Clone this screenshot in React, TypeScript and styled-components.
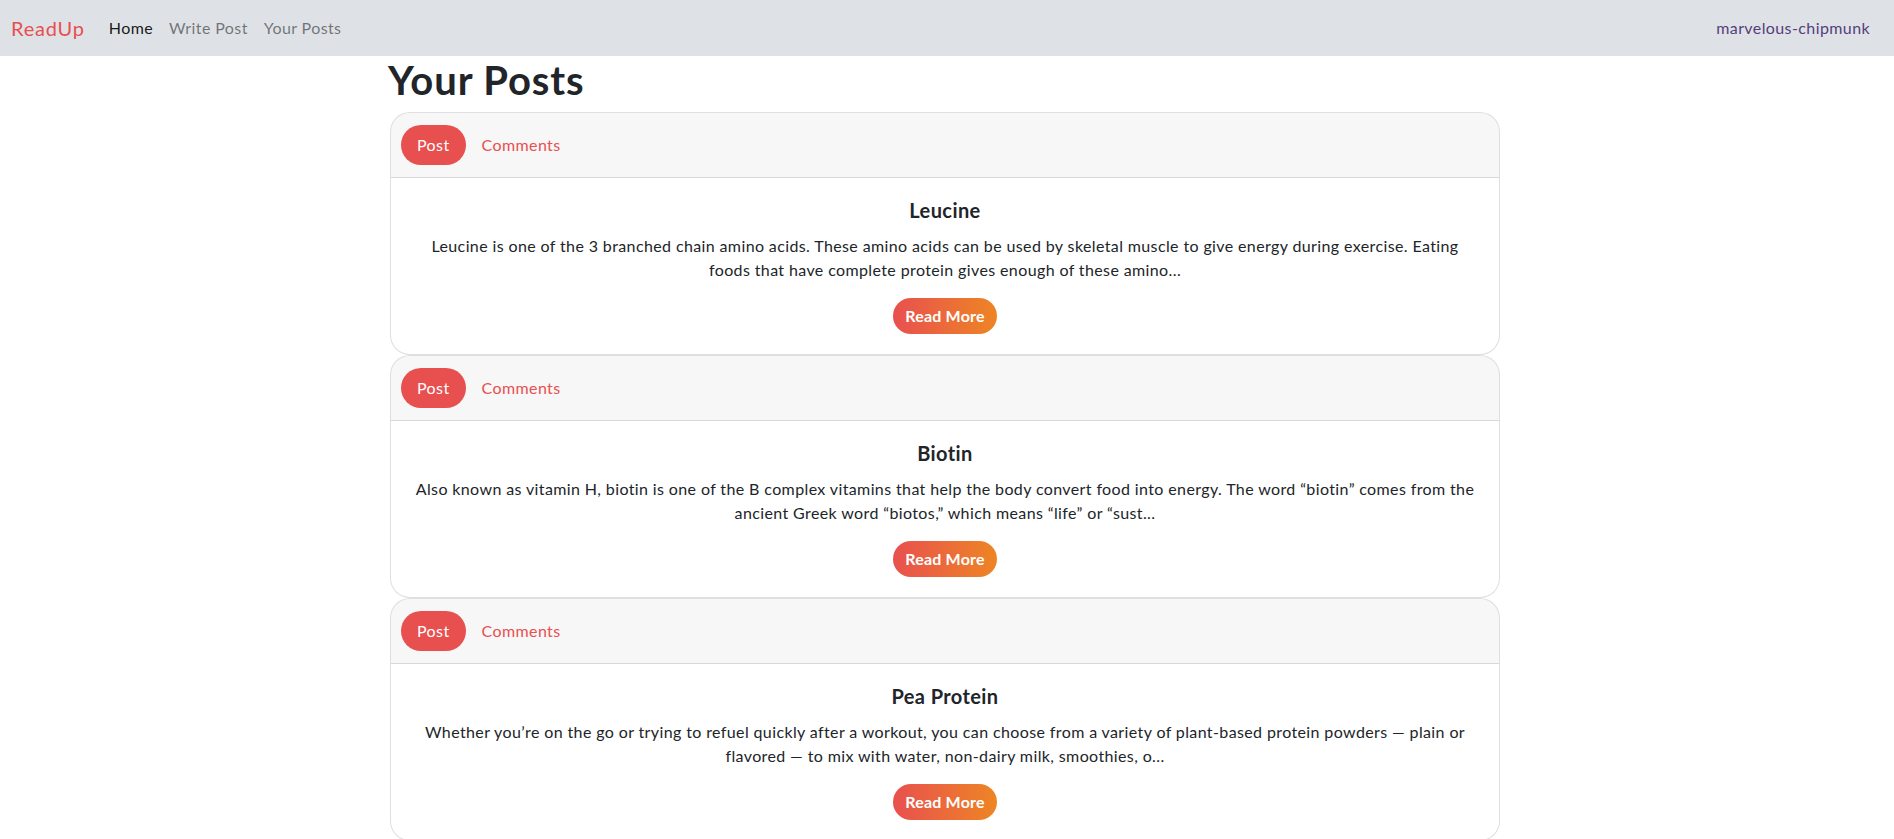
import React from "react";
import styled, { createGlobalStyle } from "styled-components";

const GlobalStyle = createGlobalStyle`
  html, body {
    margin: 0;
    padding: 0;
    background: #ffffff;
    font-family: Lato, "Noto Sans", sans-serif;
    font-size: 16px;
    line-height: 1.5;
    letter-spacing: 0.4px;
    color: #212529;
  }
  * { box-sizing: border-box; }
`;

const Navbar = styled.nav`
  height: 56px;
  background: #dee2e6;
  display: flex;
  align-items: center;
  padding: 0 16px 0 11px;
`;

const Brand = styled.a`
  font-size: 20px;
  color: #e84f4f;
  margin-right: 16px;
  text-decoration: none;
  line-height: 30px;
  letter-spacing: 0.8px;
`;

const NavList = styled.div`
  display: flex;
  align-items: center;
  flex: 1;
`;

const NavLink = styled.a<{ $active?: boolean }>`
  padding: 8px;
  color: ${(p) => (p.$active ? "rgba(0,0,0,0.9)" : "rgba(0,0,0,0.5)")};
  text-decoration: none;
  font-size: 16px;
`;

const UserLink = styled.a`
  padding: 8px;
  color: #563d7c;
  text-decoration: none;
  font-size: 16px;
`;

const Container = styled.main`
  width: 1110px;
  margin-left: calc(50% - 557px);
`;

const PageTitle = styled.h1`
  margin: 0 0 8px -2px;
  font-size: 40px;
  font-weight: 700;
  line-height: 1.2;
  letter-spacing: 0.9px;
  color: #212529;
`;

const Card = styled.section`
  border: 1px solid rgba(0, 0, 0, 0.125);
  border-radius: 20px;
  overflow: hidden;
  background: #fff;
`;

const CardHeader = styled.div`
  background: rgba(0, 0, 0, 0.03);
  border-bottom: 1px solid rgba(0, 0, 0, 0.125);
  padding: 12px 10px;
  display: flex;
  align-items: center;
`;

const Pill = styled.a<{ $active?: boolean }>`
  display: block;
  padding: 8px 16px;
  line-height: 24px;
  border-radius: 20px;
  text-decoration: none;
  color: ${(p) => (p.$active ? "#fff" : "#e84f4f")};
  background: ${(p) => (p.$active ? "#e84f4f" : "transparent")};
`;

const CardBody = styled.div`
  padding: 20px;
  text-align: center;
`;

const CardTitle = styled.h5`
  margin: 0 0 12px;
  font-size: 20px;
  font-weight: 700;
  line-height: 1.2;
`;

const CardText = styled.p`
  margin: 0 0 16px;
  font-size: 16px;
  line-height: 24px;
  letter-spacing: 0.38px;
`;

const ReadMore = styled.a`
  display: inline-block;
  padding: 6px 12px;
  line-height: 24px;
  font-size: 16px;
  font-weight: 700;
  letter-spacing: 0.2px;
  color: #fff;
  text-decoration: none;
  border-radius: 18px;
  background: linear-gradient(90deg, #e8504f 0%, #ee8524 100%);
`;

const posts = [
  {
    title: "Leucine",
    text:
      "Leucine is one of the 3 branched chain amino acids. These amino acids can be used by skeletal muscle to give energy during exercise. Eating foods that have complete protein gives enough of these amino...",
  },
  {
    title: "Biotin",
    text:
      "Also known as vitamin H, biotin is one of the B complex vitamins that help the body convert food into energy. The word \u201cbiotin\u201d comes from the ancient Greek word \u201cbiotos,\u201d which means \u201clife\u201d or \u201csust...",
  },
  {
    title: "Pea Protein",
    text:
      "Whether you\u2019re on the go or trying to refuel quickly after a workout, you can choose from a variety of plant-based protein powders \u2014 plain or flavored \u2014 to mix with water, non-dairy milk, smoothies, o...",
  },
];

export default function App() {
  return (
    <>
      <GlobalStyle />
      <Navbar>
        <Brand href="#">ReadUp</Brand>
        <NavList>
          <NavLink href="#" $active>
            Home
          </NavLink>
          <NavLink href="#">Write Post</NavLink>
          <NavLink href="#">Your Posts</NavLink>
        </NavList>
        <UserLink href="#">marvelous-chipmunk</UserLink>
      </Navbar>
      <Container>
        <PageTitle>Your Posts</PageTitle>
        {posts.map((p) => (
          <Card key={p.title}>
            <CardHeader>
              <Pill href="#" $active>
                Post
              </Pill>
              <Pill href="#">Comments</Pill>
            </CardHeader>
            <CardBody>
              <CardTitle>{p.title}</CardTitle>
              <CardText>{p.text}</CardText>
              <ReadMore href="#">Read More</ReadMore>
            </CardBody>
          </Card>
        ))}
      </Container>
    </>
  );
}
